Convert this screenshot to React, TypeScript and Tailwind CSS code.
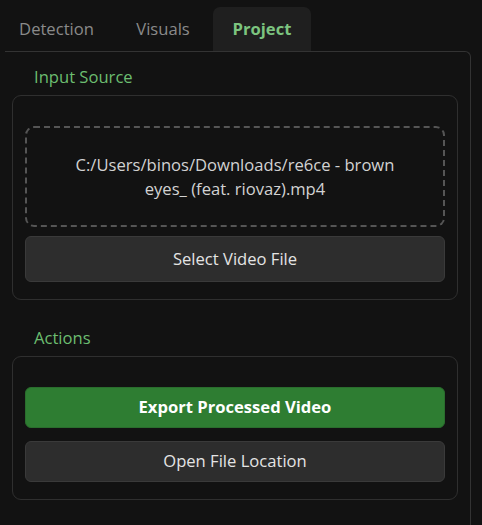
import React, { useState } from "react";

const tabs = [
  { name: "Detection", w: "w-[113px]" },
  { name: "Visuals", w: "w-[100px]" },
  { name: "Project", w: "w-[98px]" },
];

const App = () => {
  const [active, setActive] = useState("Project");

  return (
    <div
      className="w-[482px] h-[525px] overflow-hidden bg-[#121212] text-[16.6px]"
      style={{ fontFamily: '"Open Sans", "Noto Sans", sans-serif' }}
    >
      {/* tab bar */}
      <div className="flex pt-[7px] h-[51px]">
        {tabs.map((t) => (
          <button
            key={t.name}
            onClick={() => setActive(t.name)}
            className={
              t.name === active
                ? `${t.w} h-[44px] rounded-t-[7px] bg-[#1f1f1f] text-[#7cc47f] font-bold`
                : `${t.w} h-[44px] text-[#8a8a8a]`
            }
          >
            {t.name}
          </button>
        ))}
      </div>

      {/* tab pane */}
      <div className="ml-[5px] w-[466px] h-[474px] border-t border-r border-[#333333] rounded-tr-[6px] pl-[7px] pr-[12px]">
        <div className="pl-[22px] pt-[13px] h-[43px] leading-[24px] text-[#6cbd70]">
          Input Source
        </div>
        <div className="h-[205px] border border-[#2f2f2f] rounded-[9px] px-[12px] pt-[30px]">
          <div className="h-[101px] border-2 border-dashed border-[#555555] rounded-[9px] flex items-center justify-center px-[32px] text-center leading-[24px] text-[#d2d2d2]">
            C:/Users/binos/Downloads/re6ce - brown eyes_ (feat. riovaz).mp4
          </div>
          <button className="mt-[9px] w-full h-[46px] rounded-[6px] bg-[#2d2d2d] border border-[#3a3a3a] text-[#e4e4e4]">
            Select Video File
          </button>
        </div>

        <div className="pl-[22px] pt-[26px] h-[56px] leading-[24px] text-[#6cbd70]">
          Actions
        </div>
        <div className="h-[144px] border border-[#2f2f2f] rounded-[9px] px-[12px] pt-[30px] flex flex-col gap-[13px]">
          <button className="w-full h-[41px] rounded-[6px] bg-[#2e7d32] border border-[#2a6d2d] text-white font-bold">
            Export Processed Video
          </button>
          <button className="w-full h-[41px] rounded-[6px] bg-[#2d2d2d] border border-[#3a3a3a] text-[#e4e4e4]">
            Open File Location
          </button>
        </div>
      </div>
    </div>
  );
};

export default App;
